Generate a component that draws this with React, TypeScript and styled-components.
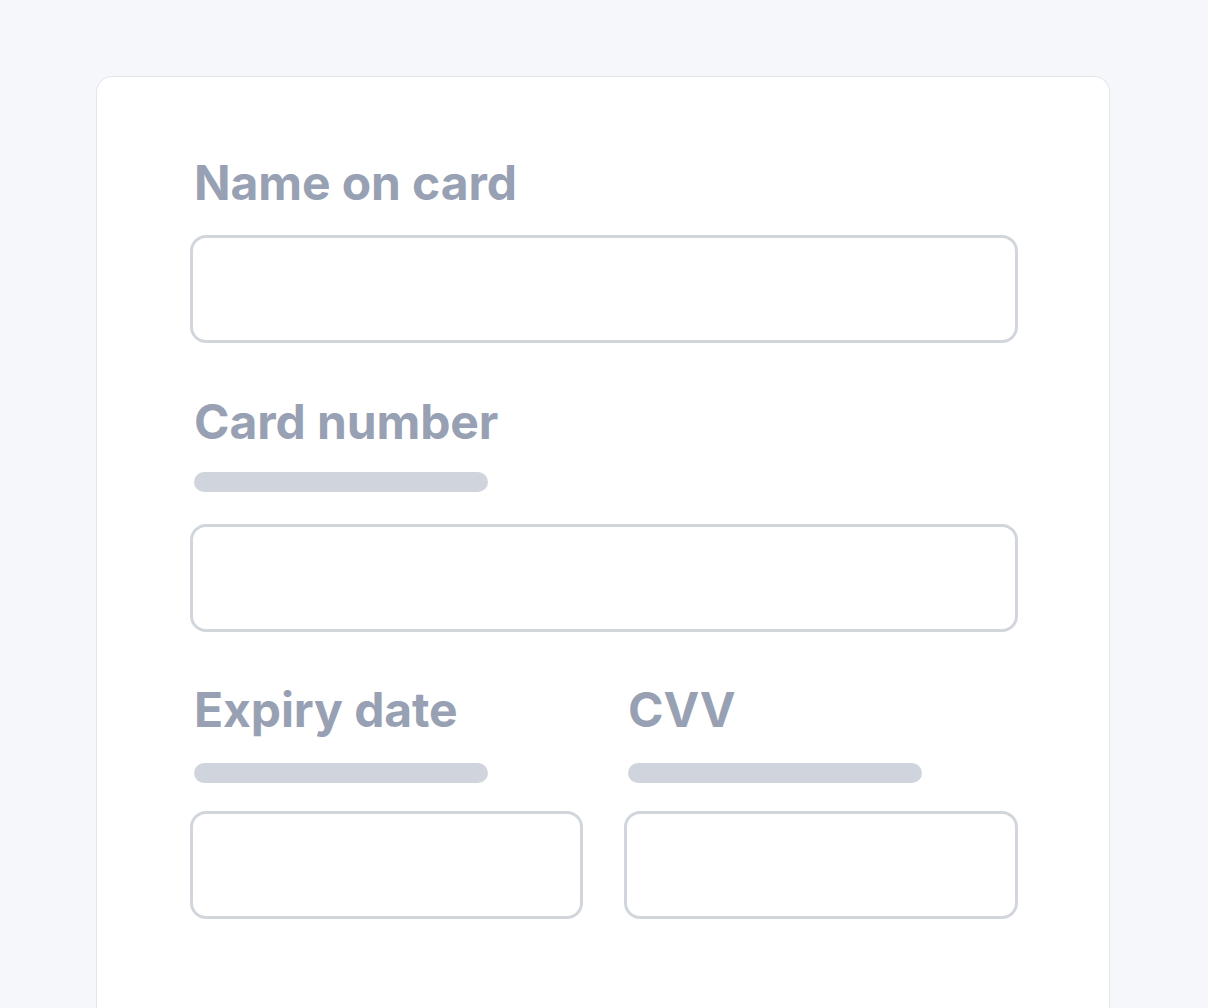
import React from "react";
import styled, { createGlobalStyle } from "styled-components";

const Global = createGlobalStyle`
  html, body { margin: 0; padding: 0; background: #f5f7fa; }
  body { font-family: Inter, "Noto Sans", sans-serif; overflow: hidden; height: 1008px; }
`;

const Page = styled.div`
  padding: 76px 98px 0 96px;
  height: 1008px;
  box-sizing: border-box;
`;

const Card = styled.div`
  background: #ffffff;
  border: 1px solid #e3e6ec;
  border-bottom: none;
  border-radius: 16px 16px 0 0;
  height: 960px;
  box-sizing: border-box;
  padding: 77px 91px 0 93px;
  display: flex;
  flex-direction: column;
`;

const Field = styled.div<{ $top?: number }>`
  display: flex;
  flex-direction: column;
  margin-top: ${(p) => p.$top ?? 0}px;
  min-width: 0;
`;

const Label = styled.label`
  font-family: Inter, sans-serif;
  font-weight: 700;
  font-size: 48px;
  line-height: 58px;
  color: #97a1b3;
  padding-left: 4px;
  letter-spacing: -0.1px;
`;

const Skeleton = styled.div<{ $w: number; $mt: number; $mb: number }>`
  width: ${(p) => p.$w}px;
  height: 20px;
  border-radius: 10px;
  background: #d0d5dd;
  margin: ${(p) => p.$mt}px 0 ${(p) => p.$mb}px 4px;
`;

const Input = styled.div<{ $mt?: number }>`
  height: 108px;
  box-sizing: border-box;
  border: 3px solid #d1d5dc;
  border-radius: 16px;
  background: #fff;
  margin-top: ${(p) => p.$mt ?? 0}px;
`;

const Row = styled.div`
  display: grid;
  grid-template-columns: 393px 1fr;
  column-gap: 41px;
  margin-top: 49px;
`;

export default function App() {
  return (
    <>
      <Global />
      <Page>
        <Card>
          <Field>
            <Label>Name on card</Label>
            <Input $mt={23} />
          </Field>
          <Field $top={50}>
            <Label>Card number</Label>
            <Skeleton $w={294} $mt={21} $mb={32} />
            <Input />
          </Field>
          <Row>
            <Field>
              <Label>Expiry date</Label>
              <Skeleton $w={294} $mt={24} $mb={28} />
              <Input />
            </Field>
            <Field>
              <Label>CVV</Label>
              <Skeleton $w={294} $mt={24} $mb={28} />
              <Input />
            </Field>
          </Row>
        </Card>
      </Page>
    </>
  );
}
